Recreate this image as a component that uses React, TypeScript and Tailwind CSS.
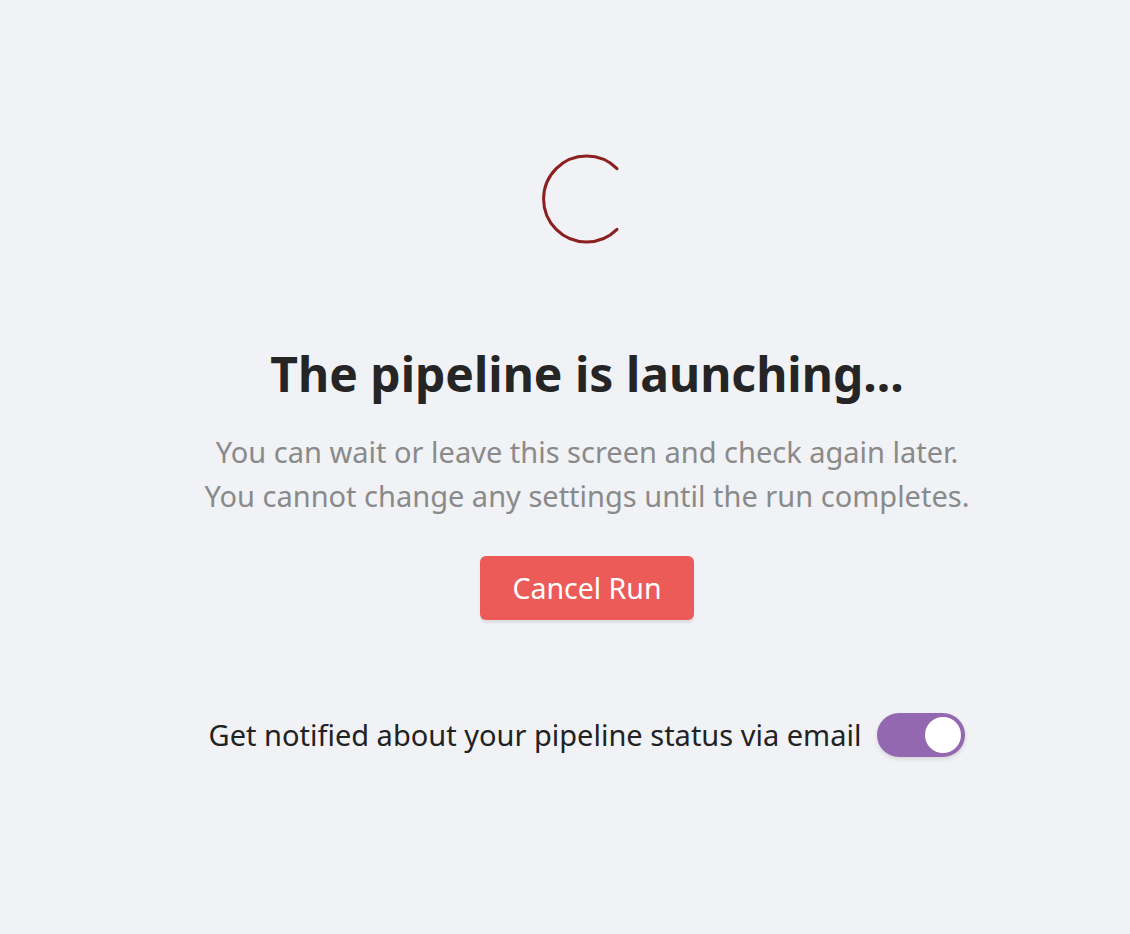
export default function App() {
  return (
    <div className="min-h-screen bg-[#f0f2f5] flex flex-col items-center pl-[44px] pt-[154px] font-['Noto_Sans',sans-serif]">
      <svg width="90" height="90" viewBox="0 0 90 90" className="ml-[-2px]">
        <path
          d="M76 14.6 A43 43 0 1 0 76 75.4"
          fill="none"
          stroke="#8c1f1f"
          strokeWidth="3"
          strokeLinecap="round"
        />
      </svg>
      <h1 className="mt-[102px] text-[48px] leading-[56px] font-bold text-[#252525]">
        The pipeline is launching...
      </h1>
      <div className="mt-[28px] text-center text-[29px] leading-[44px] text-[#8a8a8a]">
        <p>You can wait or leave this screen and check again later.</p>
        <p>You cannot change any settings until the run completes.</p>
      </div>
      <button className="mt-[38px] w-[214px] h-[64px] rounded-md bg-[#ec5b57] text-white text-[28.5px] shadow-[0_3px_2px_rgba(0,0,0,0.08)]">
        Cancel Run
      </button>
      <div className="mt-[93px] flex items-center gap-4">
        <span className="text-[29px] text-[#222]">Get notified about your pipeline status via email</span>
        <div className="w-[88px] h-[44px] rounded-full bg-[#9468b0] flex items-center justify-end pr-[4px] shadow-[0_2px_4px_rgba(0,0,0,0.12)]">
          <div className="w-[36px] h-[36px] rounded-full bg-white" />
        </div>
      </div>
    </div>
  )
}
